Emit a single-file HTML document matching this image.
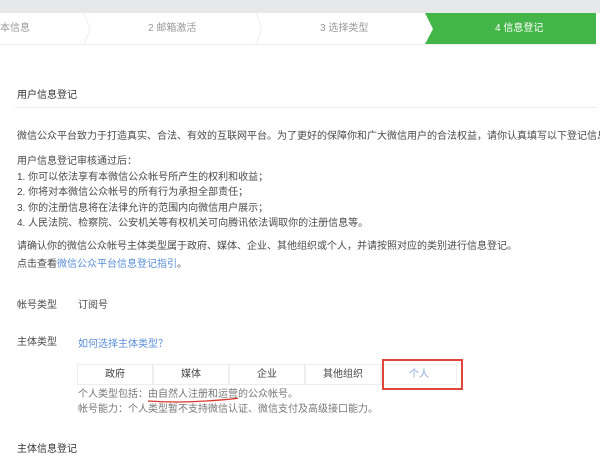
<!DOCTYPE html>
<html><head><meta charset="utf-8"><style>
*{margin:0;padding:0;box-sizing:border-box}
body{width:600px;height:466px;overflow:hidden;background:#fff;font-family:"Liberation Sans","Noto Sans CJK SC",sans-serif;font-size:10px;color:#4a4a4a;position:relative}
.a{position:absolute;white-space:nowrap;line-height:12px}
.top{position:absolute;left:0;top:0;width:600px;height:13px;background:#e7e8ea}
.bar{position:absolute;left:0;top:13px;width:596px;height:32px;background:#fff;border-bottom:1px solid #eee}
.st{position:absolute;top:23px;color:#999;font-size:10px;line-height:12px}
.blue{color:#5b8fd6}
.cell{position:absolute;top:364px;height:21px;width:76px;border:1px solid #eee;text-align:center;line-height:19px;color:#444}
.g{color:#777}
</style></head><body>
<div class="top"></div>
<div class="bar"></div>
<svg style="position:absolute;left:0;top:13px" width="600" height="32">
<polyline points="84,0 90,16 84,31" fill="none" stroke="#eee" stroke-width="1"/>
<polyline points="256,0 262,16 256,31" fill="none" stroke="#eee" stroke-width="1"/>
<polygon points="425,0 596,0 596,31 425,31 433,16" fill="#44b549"/>
</svg>
<div class="st" style="left:0">本信息</div>
<div class="st" style="left:148px">2 邮箱激活</div>
<div class="st" style="left:320px">3 选择类型</div>
<div class="st" style="left:495px;color:#fff">4 信息登记</div>

<div class="a" style="left:17px;top:90px;color:#333">用户信息登记</div>
<div style="position:absolute;left:15px;top:107px;width:582px;height:1px;background:#eee"></div>

<div class="a" style="left:17px;top:131px">微信公众平台致力于打造真实、合法、有效的互联网平台。为了更好的保障你和广大微信用户的合法权益，请你认真填写以下登记信息。</div>
<div class="a" style="left:17px;top:156px">用户信息登记审核通过后：</div>
<div class="a" style="left:17px;top:172px">1. 你可以依法享有本微信公众帐号所产生的权利和收益；</div>
<div class="a" style="left:17px;top:187px">2. 你将对本微信公众帐号的所有行为承担全部责任；</div>
<div class="a" style="left:17px;top:203px">3. 你的注册信息将在法律允许的范围内向微信用户展示；</div>
<div class="a" style="left:17px;top:218px">4. 人民法院、检察院、公安机关等有权机关可向腾讯依法调取你的注册信息等。</div>
<div class="a" style="left:17px;top:241px">请确认你的微信公众帐号主体类型属于政府、媒体、企业、其他组织或个人，并请按照对应的类别进行信息登记。</div>
<div class="a" style="left:17px;top:259px">点击查看<span class="blue">微信公众平台信息登记指引</span>。</div>

<div class="a" style="left:17px;top:300px">帐号类型</div>
<div class="a" style="left:78px;top:300px">订阅号</div>
<div class="a" style="left:17px;top:337px">主体类型</div>
<div class="a blue" style="left:78px;top:339px">如何选择主体类型？</div>

<div class="cell" style="left:77px">政府</div>
<div class="cell" style="left:153px">媒体</div>
<div class="cell" style="left:229px">企业</div>
<div class="cell" style="left:305px">其他组织</div>
<div class="cell" style="left:381px;color:#8aa8d8">个人</div>
<div style="position:absolute;left:382px;top:359px;width:81px;height:31px;border:2px solid #e0463a"></div>

<div class="a g" style="left:78px;top:389px">个人类型包括：由自然人注册和运营的公众帐号。</div>
<svg style="position:absolute;left:146px;top:397px" width="95" height="8"><path d="M2,4 Q30,6 60,4 T92,1" fill="none" stroke="#d9362b" stroke-width="1.3"/></svg>
<div class="a g" style="left:78px;top:404px">帐号能力：个人类型暂不支持微信认证、微信支付及高级接口能力。</div>

<div class="a" style="left:17px;top:444px;color:#333">主体信息登记</div>
</body></html>
